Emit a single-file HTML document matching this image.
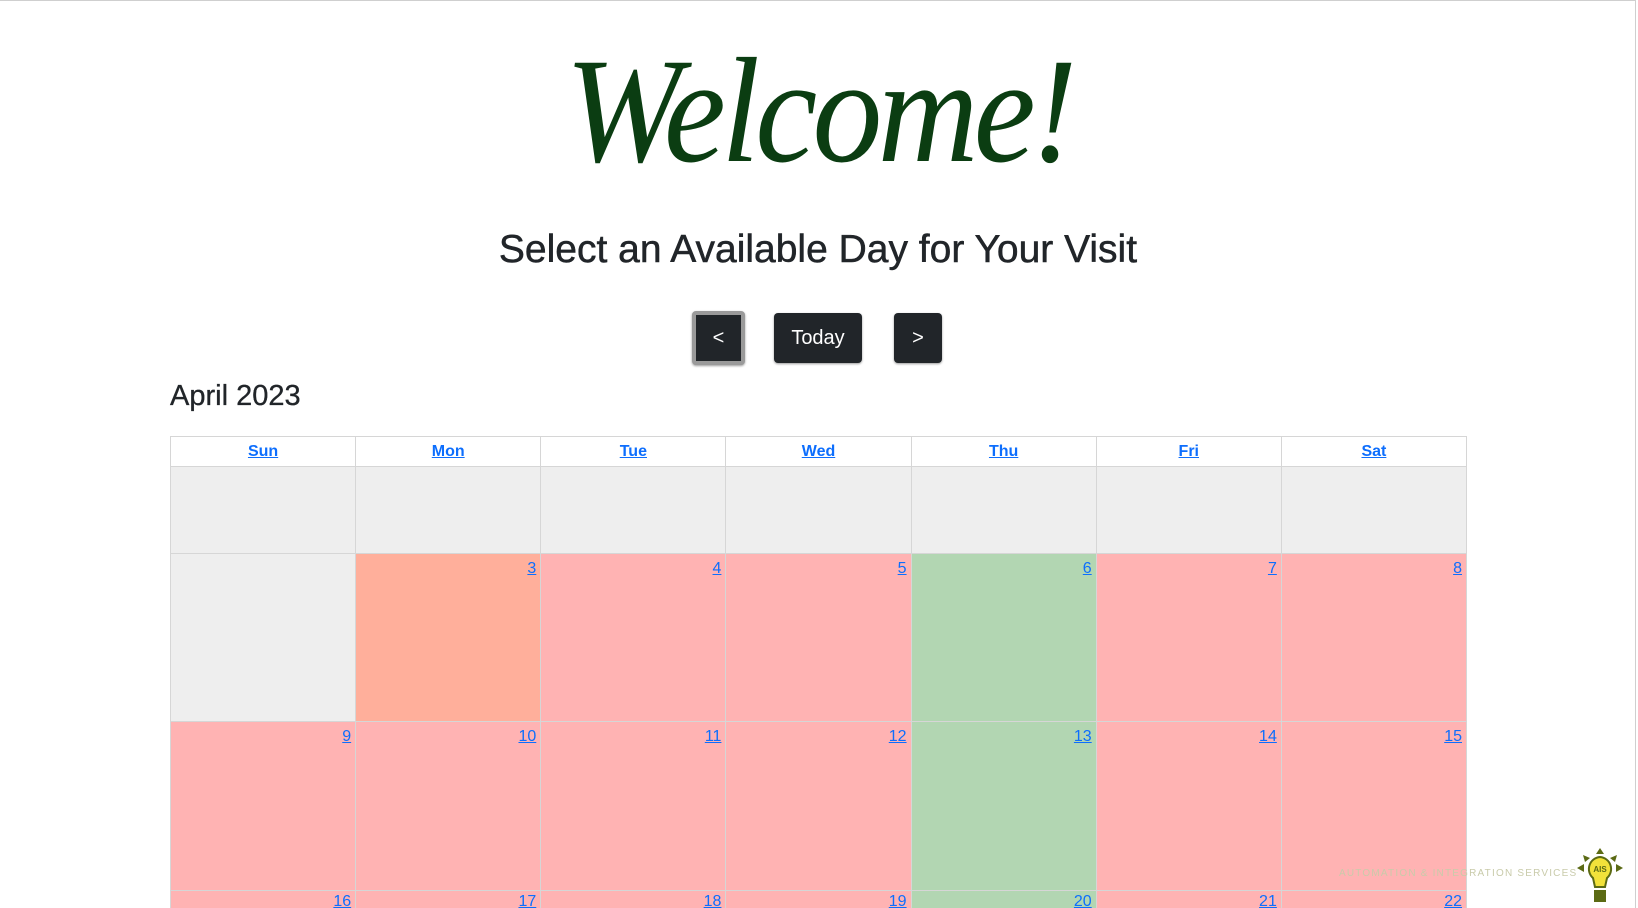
<!DOCTYPE html>
<html><head><meta charset="utf-8"><style>
*{margin:0;padding:0;box-sizing:border-box}
html,body{width:1638px;height:908px;overflow:hidden;background:#fff;font-family:"Liberation Sans",Arial,sans-serif}
#wrap{position:relative;width:1638px;height:908px;overflow:hidden}
#frame{position:absolute;left:0;top:0;width:1636px;height:908px;border-top:1px solid #cfcfcf;border-right:1px solid #cfcfcf}
.abs{position:absolute}
#welcome{left:0;width:1638px;top:36px;text-align:center;font-family:"Liberation Serif",serif;font-style:italic;font-size:150px;color:#0b3d12;line-height:1;letter-spacing:-5px;transform:scaleX(0.93)}
#sub{left:0;width:1636px;top:228px;text-align:center;font-size:39px;color:#212529;line-height:44px;-webkit-text-stroke:0.5px #212529}
.btn{position:absolute;background:#212529;color:#fff;border-radius:4px;font-size:20px;display:flex;align-items:center;justify-content:center;box-shadow:0 1px 2px rgba(0,0,0,.4)}
#month{left:170px;top:378px;font-size:29px;color:#212529;line-height:36px;-webkit-text-stroke:0.3px #212529}
table{position:absolute;left:170px;top:436px;border-collapse:collapse;table-layout:fixed;width:1297px}
td,th{border:1px solid #d6d6d6;width:185px;vertical-align:top}
th{height:30px;font-size:16px;font-weight:bold;text-align:center;vertical-align:middle}
a{color:#0d6efd;text-decoration:underline}
td{text-align:right;padding:4px 4px 0 0;font-size:16px;line-height:22px}
.last td{padding-top:3px;line-height:16px;overflow:hidden}
.g{background:#eeeeee}.o{background:#ffaf9b}.p{background:#ffb3b3}.v{background:#b2d6b2}
</style></head><body><div id="wrap">
<div class="abs" id="welcome">Welcome!</div>
<div class="abs" id="sub">Select an Available Day for Your Visit</div>
<div class="btn" style="left:692px;top:311px;width:53px;height:54px;border:4px solid #9a9a9a">&lt;</div>
<div class="btn" style="left:774px;top:313px;width:88px;height:50px">Today</div>
<div class="btn" style="left:894px;top:313px;width:48px;height:50px">&gt;</div>
<div class="abs" id="month">April 2023</div>
<table>
<tr><th><a>Sun</a></th><th><a>Mon</a></th><th><a>Tue</a></th><th><a>Wed</a></th><th><a>Thu</a></th><th><a>Fri</a></th><th><a>Sat</a></th></tr>
<tr style="height:87px"><td class="g"></td><td class="g"></td><td class="g"></td><td class="g"></td><td class="g"></td><td class="g"></td><td class="g"></td></tr>
<tr style="height:168px"><td class="g"></td><td class="o"><a>3</a></td><td class="p"><a>4</a></td><td class="p"><a>5</a></td><td class="v"><a>6</a></td><td class="p"><a>7</a></td><td class="p"><a>8</a></td></tr>
<tr style="height:169px"><td class="p"><a>9</a></td><td class="p"><a>10</a></td><td class="p"><a>11</a></td><td class="p"><a>12</a></td><td class="v"><a>13</a></td><td class="p"><a>14</a></td><td class="p"><a>15</a></td></tr>
<tr class="last" style="height:19px"><td class="p"><a>16</a></td><td class="p"><a>17</a></td><td class="p"><a>18</a></td><td class="p"><a>19</a></td><td class="v"><a>20</a></td><td class="p"><a>21</a></td><td class="p"><a>22</a></td></tr>
</table>
<div class="abs" style="left:1339px;top:868px;font-size:10px;letter-spacing:1.2px;color:#c9cbaa;white-space:nowrap">AUTOMATION &amp; INTEGRATION SERVICES</div>
<svg class="abs" style="left:1574px;top:846px" width="52" height="58" viewBox="0 0 50 58">
<g fill="#5b6a14">
<polygon points="25,2 21,8 29,8"/><polygon points="8,9 10,16 15,12"/><polygon points="42,9 40,16 35,12"/>
<polygon points="2,22 9,18 9,26"/><polygon points="48,22 41,18 41,26"/>
<rect x="19" y="44" width="12" height="12"/>
</g>
<path d="M25,11 a12,12 0 0 1 7,21 l-2,9 h-10 l-2,-9 a12,12 0 0 1 7,-21z" fill="#f2e23a" stroke="#5b6a14" stroke-width="2"/>
<text x="25" y="26" font-size="8" text-anchor="middle" fill="#5b6a14" font-family="Liberation Sans" font-weight="bold">AIS</text>
</svg>
<div id="frame"></div>
</div></body></html>
